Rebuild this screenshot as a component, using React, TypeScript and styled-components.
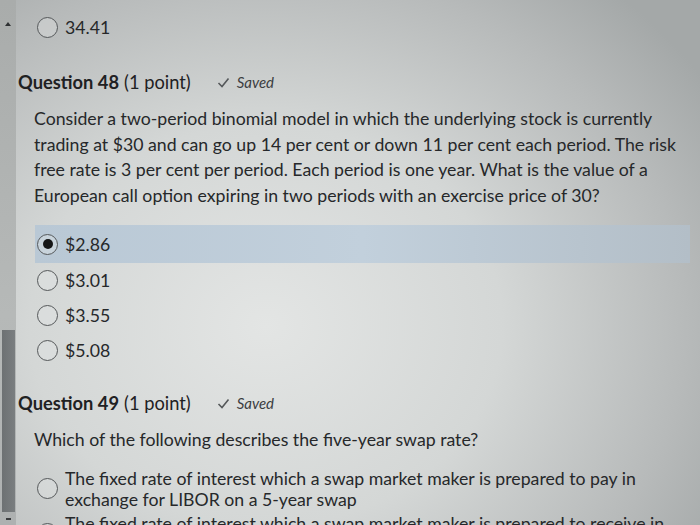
import * as React from "react";
import styled, { createGlobalStyle } from "styled-components";

const GlobalStyle = createGlobalStyle`
  html, body {
    margin: 0;
    padding: 0;
  }
  body {
    font-family: Lato, "Open Sans", sans-serif;
    color: #26282a;
  }
`;

const Screen = styled.div`
  width: 700px;
  height: 525px;
  overflow: hidden;
  display: flex;
  background:
    radial-gradient(ellipse 75% 85% at 38% 62%, #e3e5e4 0%, #d4d7d6 45%, #b7baba 80%, #a4a8a8 100%);
`;

const Scrollbar = styled.div`
  width: 16px;
  flex-shrink: 0;
  display: flex;
  flex-direction: column;
  background: linear-gradient(180deg, #a9acab 0%, #b6b9b8 60%, #aeb1b1 100%);
`;

const ArrowUp = styled.div`
  height: 30px;
  display: flex;
  justify-content: center;
  align-items: flex-end;
  padding-bottom: 4px;
  box-sizing: border-box;

  &::after {
    content: "";
    border-left: 3px solid transparent;
    border-right: 3px solid transparent;
    border-bottom: 4px solid #2e3032;
  }
`;

const Track = styled.div`
  flex: 1;
`;

const Thumb = styled.div`
  height: 182px;
  margin: 0 1px 0 2px;
  background: linear-gradient(90deg, #6d7173, #7a7e80);
`;

const ArrowDown = styled.div`
  height: 13px;
  display: flex;
  justify-content: center;
  align-items: center;

  &::after {
    content: "";
    width: 5px;
    height: 2px;
    background: #3a3c3e;
  }
`;

const Content = styled.div`
  flex: 1;
  padding: 10px 10px 0 2px;
  display: flex;
  flex-direction: column;
`;

const Options = styled.div<{ $top: number }>`
  display: flex;
  flex-direction: column;
  margin-top: ${(p) => p.$top}px;
  padding-left: 17px;
`;

const Option = styled.label<{ $selected?: boolean; $tall?: boolean }>`
  display: flex;
  align-items: center;
  gap: 7px;
  height: ${(p) => (p.$selected ? 38 : 35)}px;
  ${(p) => (p.$tall ? "height: auto; padding: 3px 0 0;" : "")}
  padding-left: 2px;
  font-size: 17.7px;
  background: ${(p) =>
    p.$selected
      ? "linear-gradient(90deg, #b9c8d5 0%, #c2d0dc 50%, #b3bec7 100%)"
      : "transparent"};
`;

const Radio = styled.span<{ $checked?: boolean }>`
  width: 19px;
  height: 19px;
  flex-shrink: 0;
  border-radius: 50%;
  border: 1.4px solid #55585a;
  background: rgba(230, 232, 232, 0.35);
  display: flex;
  align-items: center;
  justify-content: center;

  &::after {
    content: "";
    display: ${(p) => (p.$checked ? "block" : "none")};
    width: 10px;
    height: 10px;
    border-radius: 50%;
    background: #151617;
  }
`;

const OptionText = styled.span`
  line-height: 21px;
`;

const Header = styled.div<{ $top: number }>`
  margin-top: ${(p) => p.$top}px;
  height: 24px;
  display: flex;
  align-items: center;
  font-size: 18.3px;
  color: #1f2123;
`;

const Title = styled.strong`
  font-weight: 700;
  margin-right: 5px;
`;

const Saved = styled.span`
  margin-left: 26px;
  display: flex;
  align-items: center;
  gap: 7px;
  font-size: 15px;
  font-style: italic;
  color: #3b3d3f;
`;

const Check = styled.svg`
  width: 13px;
  height: 13px;
`;

const Prompt = styled.p<{ $top: number }>`
  margin: ${(p) => p.$top}px 0 0 16px;
  font-size: 17.7px;
  line-height: 25.5px;
  max-width: 650px;
`;

const SavedMark = () => (
  <Saved>
    <Check viewBox="0 0 13 13">
      <path d="M1.5 7 L5 10.5 L11.5 2.5" fill="none" stroke="#55585a" strokeWidth="1.6" />
    </Check>
    Saved
  </Saved>
);

export default function App() {
  return (
    <>
      <GlobalStyle />
      <Screen>
        <Scrollbar>
          <ArrowUp />
          <Track />
          <Thumb />
          <ArrowDown />
        </Scrollbar>
        <Content>
          <Options $top={0}>
            <Option>
              <Radio />
              <OptionText>34.41</OptionText>
            </Option>
          </Options>

          <Header $top={26}>
            <Title>Question 48</Title>(1 point)
            <SavedMark />
          </Header>
          <Prompt $top={13}>
            Consider a two-period binomial model in which the underlying stock is currently
            trading at $30 and can go up 14 per cent or down 11 per cent each period. The risk
            free rate is 3 per cent per period. Each period is one year. What is the value of a
            European call option expiring in two periods with an exercise price of 30?
          </Prompt>
          <Options $top={17}>
            <Option $selected>
              <Radio $checked />
              <OptionText>$2.86</OptionText>
            </Option>
            <Option>
              <Radio />
              <OptionText>$3.01</OptionText>
            </Option>
            <Option>
              <Radio />
              <OptionText>$3.55</OptionText>
            </Option>
            <Option>
              <Radio />
              <OptionText>$5.08</OptionText>
            </Option>
          </Options>

          <Header $top={24}>
            <Title>Question 49</Title>(1 point)
            <SavedMark />
          </Header>
          <Prompt $top={13}>Which of the following describes the five-year swap rate?</Prompt>
          <Options $top={12}>
            <Option $tall>
              <Radio />
              <OptionText>
                The fixed rate of interest which a swap market maker is prepared to pay in
                <br />
                exchange for LIBOR on a 5-year swap
              </OptionText>
            </Option>
            <Option $tall>
              <Radio />
              <OptionText>
                The fixed rate of interest which a swap market maker is prepared to receive in
                <br />
                exchange for LIBOR on a 5-year swap
              </OptionText>
            </Option>
          </Options>
        </Content>
      </Screen>
    </>
  );
}
